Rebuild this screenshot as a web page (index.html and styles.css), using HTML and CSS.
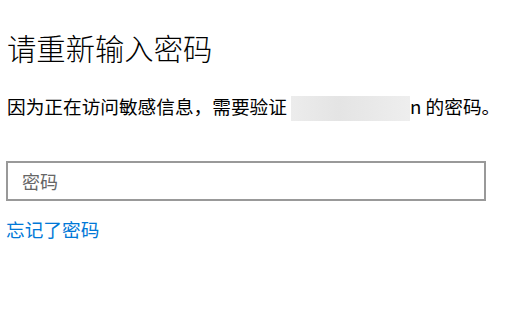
FILE: index.html
```html
<!DOCTYPE html>
<html lang="zh-CN">
<head>
  <meta charset="UTF-8" />
  <meta name="viewport" content="width=device-width, initial-scale=1.0" />
  <title>请重新输入密码</title>
  <link rel="stylesheet" href="styles.css">
</head>
<body>
  <div class="panel">
    <h1 class="title">请重新输入密码</h1>
    <p class="desc">因为正在访问敏感信息，需要验证 <span class="masked"></span>n 的密码。</p>
    <input class="pwd" type="password" placeholder="密码" />
    <a class="forgot" href="#">忘记了密码</a>
  </div>
</body>
</html>
```

FILE: styles.css
```css
* { box-sizing: border-box; }
body {
  margin: 0;
  background: #ffffff;
  font-family: "Noto Sans CJK SC", "Noto Sans", sans-serif;
  color: #000000;
}
.panel {
  display: flex;
  flex-direction: column;
  align-items: flex-start;
  padding: 25px 0 0 6px;
}
.title {
  margin: 0 0 0 1px;
  font-size: 29.33px;
  font-weight: 300;
  line-height: 44px;
}
.desc {
  margin: 23px 0 0 1px;
  font-size: 18.67px;
  line-height: 28px;
}
.masked {
  display: inline-block;
  width: 119px;
  height: 25px;
  vertical-align: -7px;
  background: linear-gradient(to right, #ececec, #e4e4e4 40%, #eeeeee);
}
.pwd {
  margin-top: 40px;
  width: 480px;
  height: 40px;
  border: 2px solid #999999;
  padding: 0 14px;
  font-family: inherit;
  font-size: 18px;
  outline: none;
}
.pwd::placeholder {
  color: #666666;
}
.forgot {
  margin-top: 14px;
  font-size: 18.67px;
  line-height: 28px;
  color: #0078d7;
  text-decoration: none;
}
```
